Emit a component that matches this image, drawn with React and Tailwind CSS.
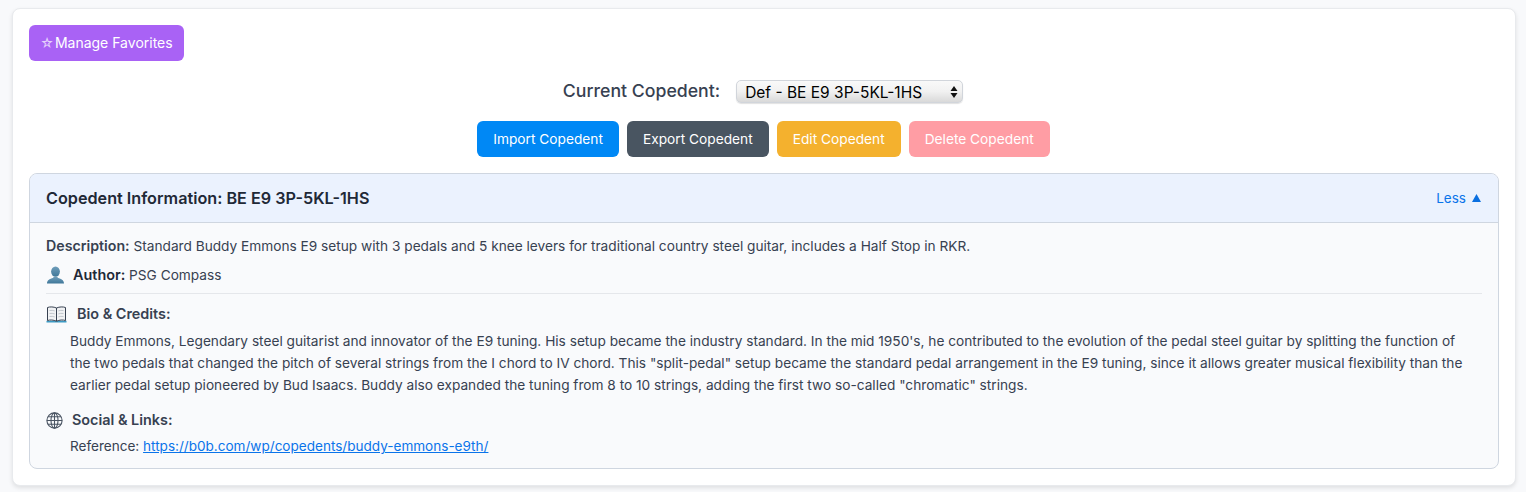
const PersonIcon = () => (
  <svg width="19" height="18" viewBox="0 0 19 18" className="shrink-0">
    <defs>
      <linearGradient id="bust" x1="0" y1="0" x2="0" y2="1">
        <stop offset="0" stopColor="#6f9dba" />
        <stop offset="1" stopColor="#3f7799" />
      </linearGradient>
    </defs>
    <ellipse cx="9.500" cy="5.600" rx="4.400" ry="5.200" fill="url(#bust)" />
    <path d="M1 17.500c0-3.600 3.400-4.600 5.800-5.400l1-1.200h3.400l1 1.200c2.400.8 5.800 1.800 5.800 5.400z" fill="url(#bust)" />
  </svg>
)

const BookIcon = () => (
  <svg width="21" height="17" viewBox="0 0 21 17" className="shrink-0">
    <path d="M.5 14.800h20v1.600H.5z" fill="#3d9ac4" />
    <path d="M1.500 1.500C4 .6 7.500.7 10.500 2c3-1.300 6.500-1.400 9-.5v13c-2.500-.8-6-.7-9 .7-3-1.400-6.500-1.500-9-.7z" fill="#f1f2f4" stroke="#374151" strokeWidth="1" />
    <path d="M10.500 2v13" stroke="#374151" strokeWidth="1" />
    <path d="M3.500 4.500c1.800-.3 3.700-.2 5.200.4M3.500 7.500c1.800-.3 3.700-.2 5.200.4M3.500 10.500c1.800-.3 3.700-.2 5.200.4M17.500 4.500c-1.800-.3-3.700-.2-5.200.4M17.500 7.500c-1.800-.3-3.700-.2-5.200.4M17.500 10.500c-1.800-.3-3.700-.2-5.200.4" stroke="#b6bcc4" strokeWidth=".8" fill="none" />
  </svg>
)

const GlobeIcon = () => (
  <svg width="17" height="17" viewBox="0 0 17 17" fill="none" stroke="#4b5563" strokeWidth="1.100" className="shrink-0">
    <circle cx="8.500" cy="8.500" r="7.600" />
    <ellipse cx="8.500" cy="8.500" rx="3.500" ry="7.600" />
    <path d="M8.500.9v15.200M.9 8.500h15.200M2 4.700h13M2 12.300h13" />
  </svg>
)

const actions = [
  { label: 'Import Copedent', color: 'bg-[#0088f5]' },
  { label: 'Export Copedent', color: 'bg-[#495561]' },
  { label: 'Edit Copedent', color: 'bg-[#f4b12e]' },
  { label: 'Delete Copedent', color: 'bg-[#ff9da4]' },
]

export default function App() {
  return (
    <div className="min-h-[492px] bg-[#f8f9fb] pt-2 pl-3 pr-[10px] font-['Inter',sans-serif] text-[#374151]">
      <div className="h-[478px] rounded-lg border border-[#e8eaed] bg-white p-4 shadow-[0_2px_4px_rgba(0,0,0,0.1)]">
        <button className="block h-9 w-[155px] rounded-md bg-[#a962f5] pb-px text-center text-[14px] text-white">
          <span className="mr-[-3px] text-[13px] opacity-70">☆</span> Manage Favorites
        </button>

        <div className="mt-[19px] flex h-[23px] items-center justify-center gap-4">
          <label className="text-[17.700px] font-medium text-[#374151]">Current Copedent:</label>
          <div className="relative mr-[2px] h-[23px] w-[227px]">
            <select className="block h-full w-full appearance-none rounded-[5px] border border-[#d1d5db] bg-gradient-to-b from-[#f9f9f9] via-[#f1f1f1] to-[#d9d9d9] pb-px pl-2 text-[15.500px] text-black shadow-[0_1px_1px_rgba(0,0,0,0.12)]">
              <option>Def - BE E9 3P-5KL-1HS</option>
            </select>
            <svg width="8" height="14" viewBox="0 0 8 14" className="pointer-events-none absolute right-[5px] top-[5px]">
              <path d="M4 1l3.500 5h-7zM4 13l3.500-5h-7z" fill="#111" />
            </svg>
          </div>
        </div>

        <div className="mt-[18px] flex justify-center gap-2 pr-px">
          {actions.map((a) => (
            <button key={a.label} className={`block h-9 rounded-md px-4 text-[13.730px] text-white ${a.color}`}>
              {a.label}
            </button>
          ))}
        </div>

        <div className="mt-4 h-[296px] overflow-hidden rounded-lg border border-[#cfd6e0] bg-[#f9fafc]">
          <div className="flex h-[49px] items-center justify-between border-b border-[#cfd6e0] bg-[#ebf2fe] px-4">
            <h3 className="text-[16.200px] font-semibold text-[#1f2937]">Copedent Information: BE E9 3P-5KL-1HS</h3>
            <button className="mr-px flex items-center gap-[6px] text-[13.500px] text-[#0a74ea]">
              Less
              <svg width="9" height="8" viewBox="0 0 9 8"><path d="M4.500 0L9 8H0z" fill="#0a6fe0" /></svg>
            </button>
          </div>
          <div className="px-4 pt-3 text-[13.680px] leading-[22px]">
            <p>
              <strong className="text-[14.200px] font-semibold">Description:</strong> Standard Buddy Emmons E9 setup with 3 pedals and 5 knee levers for traditional country steel guitar, includes a Half Stop in RKR.
            </p>
            <div className="mt-[7px] flex items-center gap-2">
              <PersonIcon />
              <p>
                <strong className="text-[14.400px] font-semibold text-[#1f2937]">Author:</strong> PSG Compass
              </p>
            </div>
            <hr className="mt-[7px] border-[#e5e7eb]" />
            <div className="mt-[9px] flex items-center gap-[10px] text-[14.400px]">
              <BookIcon />
              <strong className="font-semibold">Bio &amp; Credits:</strong>
            </div>
            <p className="mt-[5px] pl-6 pr-1">
              Buddy Emmons, Legendary steel guitarist and innovator of the E9 tuning. His setup became the industry standard. In the mid 1950's, he contributed to the evolution of the pedal steel guitar by splitting the function of the two pedals that changed the pitch of several strings from the I chord to IV chord. This "split-pedal" setup became the standard pedal arrangement in the E9 tuning, since it allows greater musical flexibility than the earlier pedal setup pioneered by Bud Isaacs. Buddy also expanded the tuning from 8 to 10 strings, adding the first two so-called "chromatic" strings.
            </p>
            <div className="mt-[13px] flex items-center gap-[9px] text-[14.400px]">
              <GlobeIcon />
              <strong className="font-semibold">Social &amp; Links:</strong>
            </div>
            <p className="mt-[4px] pl-6 text-[13.550px]">
              Reference: <a href="#" className="text-[#0a74ea] underline">https://b0b.com/wp/copedents/buddy-emmons-e9th/</a>
            </p>
          </div>
        </div>
      </div>
    </div>
  )
}
